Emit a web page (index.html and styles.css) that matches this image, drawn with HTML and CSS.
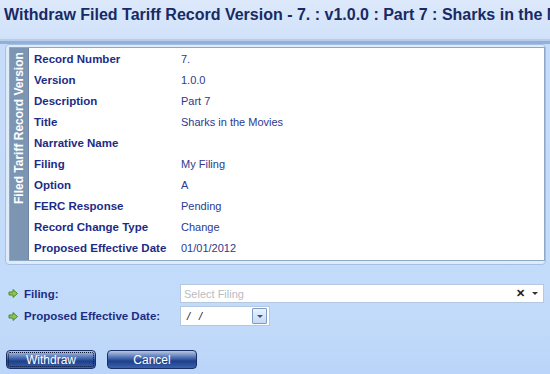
FILE: index.html
```html
<!DOCTYPE html>
<html lang="en">
<head>
    <meta charset="UTF-8">
    <title>Withdraw Filed Tariff Record Version</title>
    <link rel="stylesheet" href="styles.css">
</head>
<body>

    <!-- Title bar -->
    <div class="dlg-header">
        <h1 class="dlg-title">Withdraw Filed Tariff Record Version - 7. : v1.0.0 : Part 7 : Sharks in the Movies</h1>
    </div>

    <!-- Record details -->
    <div class="record-panel">
        <div class="record-inner">
            <div class="record-legend"><span>Filed Tariff Record Version</span></div>
            <div class="record-rows">
                <div class="record-row"><span class="rec-label">Record Number</span><span class="rec-value">7.</span></div>
                <div class="record-row"><span class="rec-label">Version</span><span class="rec-value">1.0.0</span></div>
                <div class="record-row"><span class="rec-label">Description</span><span class="rec-value">Part 7</span></div>
                <div class="record-row"><span class="rec-label">Title</span><span class="rec-value">Sharks in the Movies</span></div>
                <div class="record-row"><span class="rec-label">Narrative Name</span><span class="rec-value"></span></div>
                <div class="record-row"><span class="rec-label">Filing</span><span class="rec-value">My Filing</span></div>
                <div class="record-row"><span class="rec-label">Option</span><span class="rec-value">A</span></div>
                <div class="record-row"><span class="rec-label">FERC Response</span><span class="rec-value">Pending</span></div>
                <div class="record-row"><span class="rec-label">Record Change Type</span><span class="rec-value">Change</span></div>
                <div class="record-row"><span class="rec-label">Proposed Effective Date</span><span class="rec-value">01/01/2012</span></div>
            </div>
        </div>
    </div>

    <!-- Withdraw form -->
    <div class="withdraw-form">
        <div class="form-row">
            <label class="form-label">
                <svg class="req-arrow" width="10" height="9" viewBox="0 0 10 9"><path d="M1 3h4V0.5L9.5 4.5 5 8.5V6H1z" fill="#8fc25a" stroke="#4e8a22" stroke-width="1"/></svg>
                Filing:
            </label>
            <div class="combo">
                <span class="combo-text">Select Filing</span>
                <span class="combo-clear">&#x2715;</span>
                <span class="combo-arrow"></span>
            </div>
        </div>
        <div class="form-row">
            <label class="form-label">
                <svg class="req-arrow" width="10" height="9" viewBox="0 0 10 9"><path d="M1 3h4V0.5L9.5 4.5 5 8.5V6H1z" fill="#8fc25a" stroke="#4e8a22" stroke-width="1"/></svg>
                Proposed Effective Date:
            </label>
            <div class="date-box">
                <span class="date-text">/ /</span>
                <span class="date-btn"><span class="combo-arrow"></span></span>
            </div>
        </div>
    </div>

    <div class="dlg-actions">
        <button class="dlg-btn focused">Withdraw</button>
        <button class="dlg-btn">Cancel</button>
    </div>

</body>
</html>
```

FILE: styles.css
```css
/* Base */
body {
    margin: 0;
    width: 550px;
    height: 374px;
    overflow: hidden;
    font-family: Tahoma, "Liberation Sans", Arial, sans-serif;
    font-size: 11px;
    background: linear-gradient(#c6ddfa, #c3dbfa 85%, #bad5f9);
}

/* Title bar */
.dlg-header {
    height: 41px;
    background: linear-gradient(#dde9fb, #cfe1f9);
    border-bottom: 3px solid #8fb0d8;
    box-shadow: 0 -2px 0 #b7cde9 inset;
}

.dlg-title {
    margin: 0;
    padding: 6px 0 0 4px;
    font-size: 16px;
    font-weight: bold;
    color: #172a66;
    white-space: nowrap;
    overflow: hidden;
}

/* Record panel */
.record-panel {
    margin: 0 4px 0 5px;
    padding: 2px 0 3px 3px;
    border: 1px solid #a5c0e4;
    border-radius: 4px;
    background: #e0ebfa;
}

.record-inner {
    display: flex;
    border: 1px solid #8ea8c8;
    background: #fff;
    height: 212px;
}

.record-legend {
    width: 18px;
    background: #7b95b2;
    border-right: 1px solid #6c86a3;
    display: flex;
}

.record-legend span {
    writing-mode: vertical-rl;
    transform: rotate(180deg);
    text-align: end;
    color: #fff;
    font-weight: bold;
    font-size: 12px;
    padding-bottom: 4px;
    width: 18px;
    line-height: 18px;
}

.record-rows {
    padding: 0 0 0 5px;
}

.record-row {
    display: flex;
    height: 21px;
    align-items: center;
}

.rec-label {
    width: 147px;
    font-size: 11.5px;
    font-weight: bold;
    color: #1c2c86;
}

.rec-value {
    color: #2b3a8f;
}

/* Form */
.withdraw-form {
    margin-top: 19px;
}

.form-row {
    display: flex;
    align-items: center;
    margin-bottom: 3px;
}

.form-label {
    width: 172px;
    padding-left: 8px;
    display: flex;
    align-items: center;
    gap: 6px;
    font-size: 11.5px;
    font-weight: bold;
    color: #1c2c86;
}

.combo {
    width: 362px;
    height: 17px;
    border: 1px solid #b5c8e2;
    background: #fff;
    display: flex;
    align-items: center;
}

.combo-text {
    flex: 1;
    padding-left: 3px;
    color: #b8bcc4;
}

.combo-clear {
    font-size: 11px;
    font-weight: bold;
    color: #222;
    margin-right: 7px;
}

.combo-arrow {
    width: 0;
    height: 0;
    border-left: 3px solid transparent;
    border-right: 3px solid transparent;
    border-top: 3px solid #333;
    margin-right: 5px;
}

.date-box {
    width: 88px;
    height: 18px;
    border: 1px solid #b5c8e2;
    background: #fff;
    display: flex;
    align-items: center;
}

.date-text {
    flex: 1;
    padding-left: 6px;
    font-style: italic;
    color: #111;
    letter-spacing: 3px;
}

.date-btn {
    width: 13px;
    height: 14px;
    margin-right: 2px;
    border: 1px solid #7d9cc6;
    border-radius: 1px;
    background: linear-gradient(#eaf2fd, #c5d9f5);
    display: flex;
    align-items: center;
    justify-content: center;
}

.date-btn .combo-arrow {
    margin: 0;
    border-top-color: #3c4f7a;
}

/* Buttons */
.dlg-actions {
    display: flex;
    gap: 11px;
    margin: 24px 0 0 6px;
}

.dlg-btn {
    width: 90px;
    height: 19px;
    padding: 0;
    border: 1px solid #1b2f66;
    border-radius: 4px;
    background: linear-gradient(#b7c7e2, #4a6db2 40%, #1e3f8c 60%, #3c62ad);
    color: #fff;
    font-family: Tahoma, "Liberation Sans", Arial, sans-serif;
    font-size: 12px;
    cursor: pointer;
}

.dlg-btn.focused {
    outline: 1px dotted #0a1530;
    outline-offset: -3px;
}
```
